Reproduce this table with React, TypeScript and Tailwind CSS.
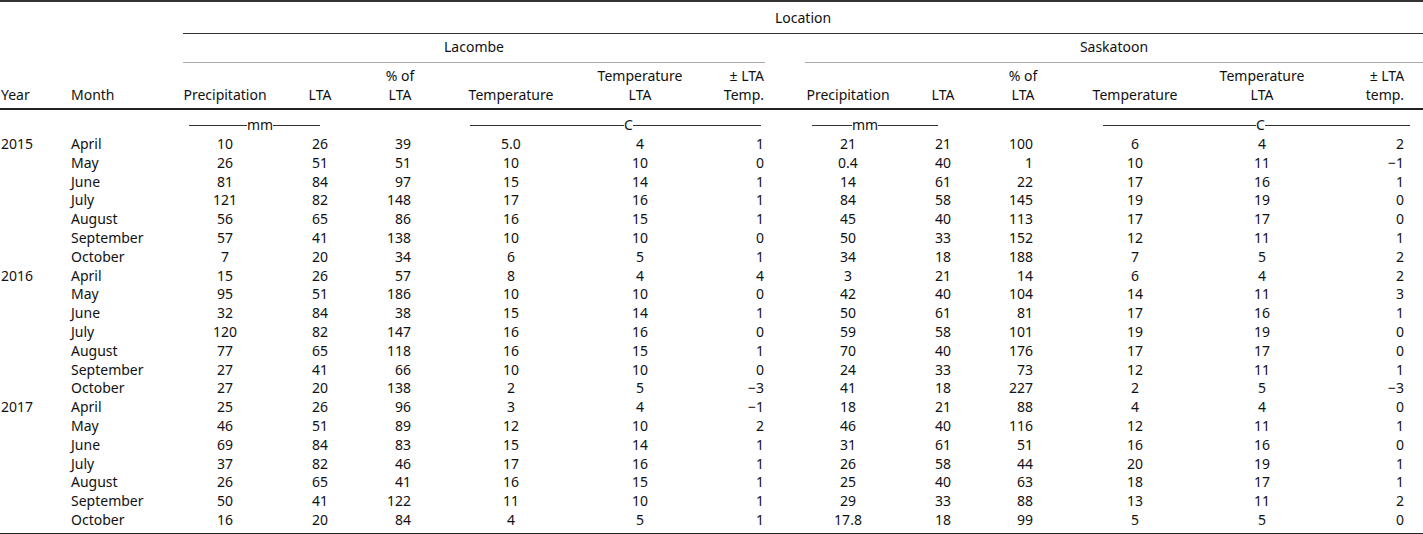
import React from "react";

type Row = {
  year?: string;
  month: string;
  l: (string | number)[];
  s: (string | number)[];
};

const rows: Row[] = [
  { year: "2015", month: "April", l: [10, 26, 39, "5.0", 4, 1], s: [21, 21, 100, 6, 4, 2] },
  { month: "May", l: [26, 51, 51, 10, 10, 0], s: ["0.4", 40, 1, 10, 11, "−1"] },
  { month: "June", l: [81, 84, 97, 15, 14, 1], s: [14, 61, 22, 17, 16, 1] },
  { month: "July", l: [121, 82, 148, 17, 16, 1], s: [84, 58, 145, 19, 19, 0] },
  { month: "August", l: [56, 65, 86, 16, 15, 1], s: [45, 40, 113, 17, 17, 0] },
  { month: "September", l: [57, 41, 138, 10, 10, 0], s: [50, 33, 152, 12, 11, 1] },
  { month: "October", l: [7, 20, 34, 6, 5, 1], s: [34, 18, 188, 7, 5, 2] },
  { year: "2016", month: "April", l: [15, 26, 57, 8, 4, 4], s: [3, 21, 14, 6, 4, 2] },
  { month: "May", l: [95, 51, 186, 10, 10, 0], s: [42, 40, 104, 14, 11, 3] },
  { month: "June", l: [32, 84, 38, 15, 14, 1], s: [50, 61, 81, 17, 16, 1] },
  { month: "July", l: [120, 82, 147, 16, 16, 0], s: [59, 58, 101, 19, 19, 0] },
  { month: "August", l: [77, 65, 118, 16, 15, 1], s: [70, 40, 176, 17, 17, 0] },
  { month: "September", l: [27, 41, 66, 10, 10, 0], s: [24, 33, 73, 12, 11, 1] },
  { month: "October", l: [27, 20, 138, 2, 5, "−3"], s: [41, 18, 227, 2, 5, "−3"] },
  { year: "2017", month: "April", l: [25, 26, 96, 3, 4, "−1"], s: [18, 21, 88, 4, 4, 0] },
  { month: "May", l: [46, 51, 89, 12, 10, 2], s: [46, 40, 116, 12, 11, 1] },
  { month: "June", l: [69, 84, 83, 15, 14, 1], s: [31, 61, 51, 16, 16, 0] },
  { month: "July", l: [37, 82, 46, 17, 16, 1], s: [26, 58, 44, 20, 19, 1] },
  { month: "August", l: [26, 65, 41, 16, 15, 1], s: [25, 40, 63, 18, 17, 1] },
  { month: "September", l: [50, 41, 122, 11, 10, 1], s: [29, 33, 88, 13, 11, 2] },
  { month: "October", l: [16, 20, 84, 4, 5, 1], s: ["17.8", 18, 99, 5, 5, 0] },
];

// alignment per value column (Lacombe, then Saskatoon)
const lCell = [
  "text-center",
  "text-center",
  "text-right pr-[16px]",
  "text-center",
  "text-center",
  "text-right pr-[1px]",
];
const sCell = [
  "text-center",
  "text-center",
  "text-right pr-[18px]",
  "text-center",
  "text-center",
  "text-right pr-[19px]",
];

function Unit({ label, left, right, ml, w }: { label: string; left: number; right: number; ml: string; w: string }) {
  return (
    <div className={`flex items-center ${ml} ${w}`}>
      <span className="h-px bg-[#333]" style={{ width: left }} />
      <span>{label}</span>
      <span className="h-px bg-[#333]" style={{ width: right }} />
    </div>
  );
}

export default function App() {
  return (
    <div
      className="w-[1423px] bg-white text-[#111] text-[14px]"
      style={{ fontFamily: '"Noto Sans", "Open Sans", sans-serif' }}
    >
      <table className="w-[1423px] table-fixed border-collapse">
        <colgroup>
          <col className="w-[71px]" />
          <col className="w-[112px]" />
          <col className="w-[84px]" />
          <col className="w-[106px]" />
          <col className="w-[54px]" />
          <col className="w-[168px]" />
          <col className="w-[90px]" />
          <col className="w-[80px]" />
          <col className="w-[40px]" />
          <col className="w-[86px]" />
          <col className="w-[104px]" />
          <col className="w-[56px]" />
          <col className="w-[168px]" />
          <col className="w-[86px]" />
          <col className="w-[118px]" />
        </colgroup>
        <thead>
          <tr className="h-[32px] border-t-2 border-[#333]">
            <th colSpan={2} />
            <th colSpan={13} className="font-normal text-center border-b border-[#333]">
              Location
            </th>
          </tr>
          <tr className="h-[30px]">
            <th colSpan={2} />
            <th colSpan={6} className="font-normal text-center p-0 align-bottom">
              <div className="h-[29px] leading-[25px] border-b border-[#aaa] w-[582px]">Lacombe</div>
            </th>
            <th />
            <th colSpan={6} className="font-normal text-center p-0 align-bottom">
              <div className="h-[29px] leading-[25px] border-b border-[#aaa] w-[618px]">Saskatoon</div>
            </th>
          </tr>
          <tr className="h-[46px] border-b-2 border-[#222] align-bottom leading-[19px] font-normal">
            <th className="font-normal text-left pl-[1px] pb-[4px]">Year</th>
            <th className="font-normal text-left pb-[4px]">Month</th>
            <th className="font-normal text-center pb-[4px]">Precipitation</th>
            <th className="font-normal text-center pb-[4px]">LTA</th>
            <th className="font-normal text-center pb-[4px]">
              % of
              <br />
              LTA
            </th>
            <th className="font-normal text-center pb-[4px]">Temperature</th>
            <th className="font-normal text-center pb-[4px]">
              Temperature
              <br />
              LTA
            </th>
            <th className="font-normal text-right pr-[1px] pb-[4px]">
              ± LTA
              <br />
              Temp.
            </th>
            <th />
            <th className="font-normal text-center pb-[4px]">Precipitation</th>
            <th className="font-normal text-center pb-[4px]">LTA</th>
            <th className="font-normal text-center pb-[4px]">
              % of
              <br />
              LTA
            </th>
            <th className="font-normal text-center pb-[4px]">Temperature</th>
            <th className="font-normal text-center pb-[4px]">
              Temperature
              <br />
              LTA
            </th>
            <th className="font-normal text-right pr-[19px] pb-[4px]">
              ± LTA
              <br />
              temp.
            </th>
          </tr>
        </thead>
        <tbody className="leading-[18.8px]">
          <tr className="h-[26px] align-bottom">
            <td colSpan={2} />
            <td colSpan={2}>
              <Unit label="mm" left={58} right={47} ml="ml-[6px]" w="w-[136px]" />
            </td>
            <td />
            <td colSpan={3}>
              <Unit label="C" left={154} right={128} ml="ml-[43px]" w="w-[292px]" />
            </td>
            <td />
            <td colSpan={2}>
              <Unit label="mm" left={40} right={60} ml="ml-[7px]" w="w-[133px]" />
            </td>
            <td />
            <td colSpan={3}>
              <Unit label="C" left={154} right={146} ml="ml-[52px]" w="w-[307px]" />
            </td>
          </tr>
          {rows.map((r, i) => {
            const last = i === rows.length - 1;
            const pad = last ? "align-top pb-[3px]" : "";
            return (
              <tr key={i} className={`h-[18.8px] ${last ? "border-b-2 border-[#222]" : ""}`}>
                <td className={`pl-[1px] ${pad}`}>{r.year ?? ""}</td>
                <td className={pad}>{r.month}</td>
                {r.l.map((v, j) => (
                  <td key={`l${j}`} className={`${lCell[j]} ${pad}`}>
                    {v}
                  </td>
                ))}
                <td className={pad} />
                {r.s.map((v, j) => (
                  <td key={`s${j}`} className={`${sCell[j]} ${pad}`}>
                    {v}
                  </td>
                ))}
              </tr>
            );
          })}
        </tbody>
      </table>
    </div>
  );
}
